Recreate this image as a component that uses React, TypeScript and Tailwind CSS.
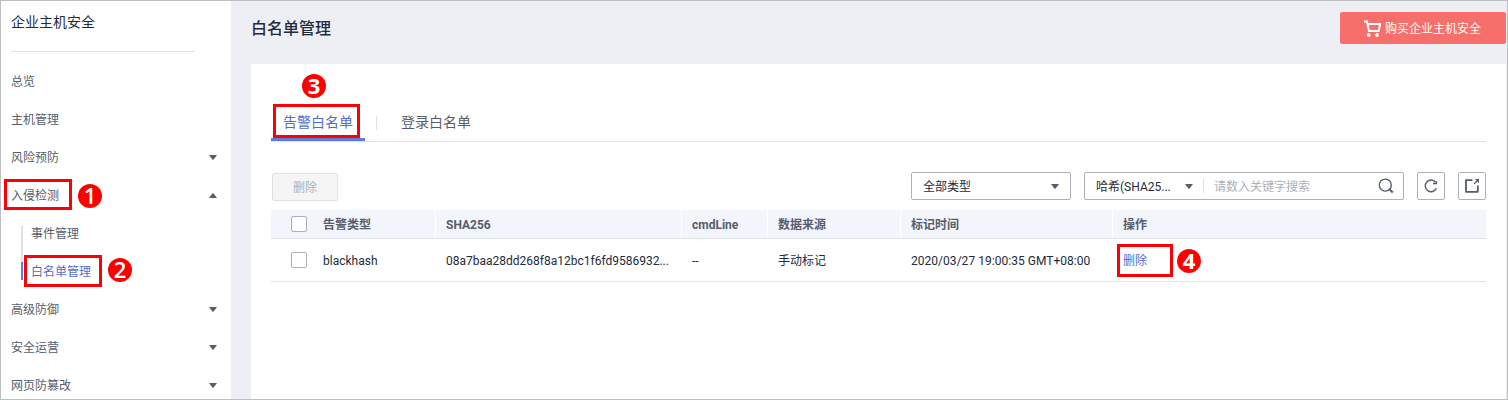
import React from 'react';

const Caret = ({ up = false }: { up?: boolean }) => (
  <svg width="8" height="5" viewBox="0 0 8 5" className="block shrink-0">
    <path d={up ? 'M0 5 L3.6 0.3 H4.4 L8 5 Z' : 'M0 0 H8 L4.4 4.7 H3.6 Z'} fill="#575d6c" />
  </svg>
);

const NavItem = ({ label, caret }: { label: string; caret?: 'up' | 'down' }) => (
  <li className="flex h-[38px] items-center justify-between pr-3.5 pl-2.5">
    <span>{label}</span>
    {caret && (
      <span className="pb-0.5">
        <Caret up={caret === 'up'} />
      </span>
    )}
  </li>
);

const Frame = ({ className }: { className: string }) => (
  <div className={`pointer-events-none absolute border-3 border-[#fb0007] ${className}`} />
);

const Badge = ({ n, className }: { n: number; className: string }) => (
  <div
    className={`absolute flex size-6 items-center justify-center rounded-full bg-[#fe0000] pb-[3px] font-['Open_Sans',sans-serif] text-[22px] leading-none text-white ${className}`}
  >
    {n}
  </div>
);

const Checkbox = () => (
  <span className="block size-4 rounded-[2px] border border-[#adb0b8] bg-white" />
);

const GRID = 'grid grid-cols-[42px_123px_246px_86px_133px_212px_1fr]';

const HeadCell = ({ children, last = false }: { children?: React.ReactNode; last?: boolean }) => (
  <div className={`flex items-center pt-0.5 pl-2.5 ${last ? '' : 'border-r border-white'}`}>{children}</div>
);

const Sidebar = () => (
  <aside className="w-[230px] shrink-0 bg-white text-xs text-[#575d6c]">
    <h1 className="mr-9 ml-2.5 flex h-[51px] items-center border-b border-[#dfe1e6] pb-[9px] text-sm text-[#252b3a]">
      企业主机安全
    </h1>
    <ul className="pt-[11px]">
      <NavItem label="总览" />
      <NavItem label="主机管理" />
      <NavItem label="风险预防" caret="down" />
      <NavItem label="入侵检测" caret="up" />
      <li className="flex h-[76px] pl-5">
        <div className="mt-[11px] flex h-[54px] w-0.5 flex-col">
          <div className="h-9 bg-[#dfe1e6]" />
          <div className="h-[18px] bg-[#5e7ce0]" />
        </div>
        <ul className="pl-2">
          <li className="flex h-[38px] items-center">事件管理</li>
          <li className="flex h-[38px] items-center text-[#526ecc]">白名单管理</li>
        </ul>
      </li>
      <NavItem label="高级防御" caret="down" />
      <NavItem label="安全运营" caret="down" />
      <NavItem label="网页防篡改" caret="down" />
    </ul>
  </aside>
);

const Toolbar = () => (
  <div className="flex h-7 items-center text-xs">
    <button className="mt-0.5 ml-px h-7 w-[66px] rounded-[2px] border border-[#dfe1e6] bg-[#f5f5f6] pt-0.5 text-[#adb0b8]">
      删除
    </button>
    <div className="ml-auto flex h-7 w-40 items-center justify-between rounded-[2px] border border-[#adb0b8] pr-[11px] pl-[11px] text-[#252b3a]">
      <span className="pt-0.5">全部类型</span>
      <Caret />
    </div>
    <div className="ml-[13px] flex h-7 w-80 items-center rounded-[2px] border border-[#adb0b8] pr-[9px] pl-[11px] text-[#252b3a]">
      <span className="w-[89px] pt-0.5">哈希(SHA25...</span>
      <Caret />
      <span className="ml-2.5 h-3.5 w-px bg-[#dfe1e6]" />
      <span className="ml-2.5 pt-0.5 text-[#adb0b8]">请数入关键字搜索</span>
      <svg width="16" height="16" viewBox="0 0 16 16" fill="none" stroke="#575d6c" className="ml-auto">
        <circle cx="7.3" cy="7.1" r="6" strokeWidth="1.4" />
        <path d="M11.4 11.3 L14.8 14.5" strokeWidth="2" />
      </svg>
    </div>
    <button className="ml-[13px] flex size-7 items-center justify-center rounded-[2px] border border-[#adb0b8]">
      <svg width="14" height="14" viewBox="0 0 14 14" fill="none" stroke="#575d6c" strokeWidth="1.5">
        <path d="M12.3 9.4 A5.8 5.8 0 1 1 11.6 3.2" />
        <path d="M13.2 1.2 V5.2 H9 V3.8 H11.6 Z" fill="#575d6c" stroke="none" />
      </svg>
    </button>
    <button className="ml-[13px] flex size-7 items-center justify-center rounded-[2px] border border-[#adb0b8]">
      <svg width="16" height="16" viewBox="0 0 16 16" fill="none" stroke="#575d6c" strokeWidth="1.8" strokeLinejoin="round">
        <path d="M8.4 2.2 H2 V13.8 H13.8 V7.4" />
        <path d="M10.2 5.8 L12.8 3.2" strokeWidth="1.3" />
        <path d="M10.8 1 H15 V5.2 Z" fill="#575d6c" stroke="none" />
      </svg>
    </button>
  </div>
);

export default function App() {
  return (
    <div className="relative flex h-[400px] w-[1508px] overflow-hidden border border-[#bfbfbf] bg-[#eeeff5] font-[Roboto,'Noto_Sans_CJK_SC',sans-serif]">
      <Sidebar />
      <main className="flex grow flex-col pl-5">
        <header className="mr-px flex h-[63px] shrink-0 items-center justify-between pb-[9px]">
          <h2 className="pt-0.5 text-base font-medium text-[#252b3a]">白名单管理</h2>
          <button className="flex h-8 w-[166px] items-center justify-center gap-1 rounded-[2px] bg-[#f66f6a] pr-px text-xs text-white">
            <svg width="17" height="17" viewBox="0 0 17 17" fill="none" stroke="white">
              <path d="M0 1.4 H3 L5 11 H14.6 L16.2 4 H3.8" strokeWidth="2" />
              <circle cx="4.7" cy="15" r="1.9" fill="white" stroke="none" />
              <circle cx="13" cy="15" r="1.9" fill="white" stroke="none" />
            </svg>
            <span className="pt-0.5">购买企业主机安全</span>
          </button>
        </header>
        <section className="mr-px grow bg-white px-5">
          <nav className="flex h-[78px] items-end border-b border-[#dfe1e6] text-sm text-[#575d6c]">
            <span className="flex h-[38px] w-[94px] items-center border-b-3 border-[#5e7ce0] pt-0.5 pl-3 text-[#526ecc]">
              告警白名单
            </span>
            <span className="mb-[11px] ml-[11px] h-3.5 w-px bg-[#dfe1e6]" />
            <span className="flex h-[38px] items-center pb-px pl-6">登录白名单</span>
          </nav>
          <div className="pt-[30px]">
            <Toolbar />
          </div>
          <div className="mt-2.5 text-xs">
            <div className={`${GRID} h-[29px] border-b border-[#dfe1e6] bg-[#f2f5fc] font-bold text-[#575d6c]`}>
              <div className="flex items-center pl-5"><Checkbox /></div>
              <HeadCell>告警类型</HeadCell>
              <HeadCell>SHA256</HeadCell>
              <HeadCell>cmdLine</HeadCell>
              <HeadCell>数据来源</HeadCell>
              <HeadCell>标记时间</HeadCell>
              <HeadCell last>操作</HeadCell>
            </div>
            <div className={`${GRID} h-[43px] items-center border-b border-[#dfe1e6] whitespace-nowrap text-[#252b3a]`}>
              <div className="pl-5"><Checkbox /></div>
              <div className="pt-0.5 pl-2.5">blackhash</div>
              <div className="pt-0.5 pl-2.5">08a7baa28dd268f8a12bc1f6fd9586932...</div>
              <div className="pt-0.5 pl-2.5">--</div>
              <div className="pt-0.5 pl-2.5">手动标记</div>
              <div className="pt-0.5 pl-2.5 tracking-[0.03px]">2020/03/27 19:00:35 GMT+08:00</div>
              <div className="pt-0.5 pl-2.5 text-[#526ecc]">删除</div>
            </div>
          </div>
        </section>
      </main>

      <Frame className="top-[178px] left-[3px] h-[31px] w-[68px]" />
      <Badge n={1} className="top-[183px] left-[77px] font-semibold" />
      <Frame className="top-[254px] left-[23px] h-8 w-[78px]" />
      <Badge n={2} className="top-[257px] left-[107px] font-semibold" />
      <Frame className="top-[103px] left-[272px] h-[34px] w-[87px]" />
      <Badge n={3} className="top-[73px] left-[301px] font-bold" />
      <Frame className="top-[243px] left-[1116px] h-[33px] w-14" />
      <Badge n={4} className="top-[248px] left-[1176px] font-bold" />
    </div>
  );
}
